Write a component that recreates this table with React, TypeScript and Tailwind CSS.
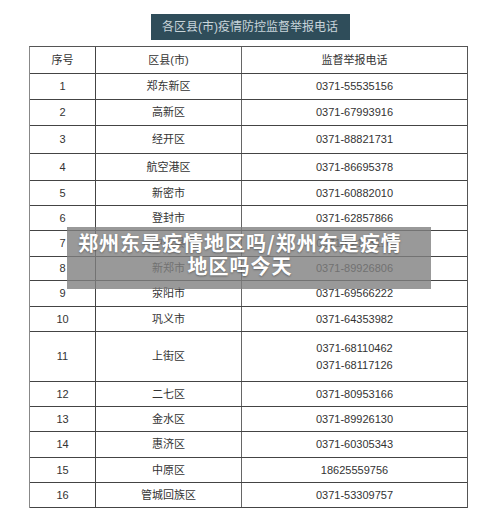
const rows = [
  { n: "1", area: "郑东新区", phone: ["0371-55535156"], h: "h-[26px]" },
  { n: "2", area: "高新区", phone: ["0371-67993916"], h: "h-[26px]" },
  { n: "3", area: "经开区", phone: ["0371-88821731"], h: "h-[28px]" },
  { n: "4", area: "航空港区", phone: ["0371-86695378"], h: "h-[27px]" },
  { n: "5", area: "新密市", phone: ["0371-60882010"], h: "h-[25px]" },
  { n: "6", area: "登封市", phone: ["0371-62857866"], h: "h-[25px]" },
  { n: "7", area: "中牟县", phone: ["0371-62193110"], h: "h-[26px]" },
  { n: "8", area: "新郑市", phone: ["0371-89926806"], h: "h-[24px]" },
  { n: "9", area: "荥阳市", phone: ["0371-69566222"], h: "h-[26px]" },
  { n: "10", area: "巩义市", phone: ["0371-64353982"], h: "h-[25px]" },
  { n: "11", area: "上街区", phone: ["0371-68110462", "0371-68117126"], h: "h-[50px]" },
  { n: "12", area: "二七区", phone: ["0371-80953166"], h: "h-[25px]" },
  { n: "13", area: "金水区", phone: ["0371-89926130"], h: "h-[25px]" },
  { n: "14", area: "惠济区", phone: ["0371-60305343"], h: "h-[26px]" },
  { n: "15", area: "中原区", phone: ["18625559756"], h: "h-[25px]" },
  { n: "16", area: "管城回族区", phone: ["0371-53309757"], h: "h-[25px]" },
];

export default function App() {
  return (
    <div className="relative w-[500px] h-[518px] bg-white overflow-hidden font-['Liberation_Sans','Noto_Sans_CJK_SC',sans-serif] text-[#333]">
      {/* Title */}
      <div className="pt-[14px] flex justify-center">
        <div className="w-[199px] h-[26px] bg-[#2f4d5a] text-[#c9d5da] text-[12px] flex items-center justify-center">
          各区县(市)疫情防控监督举报电话
        </div>
      </div>

      {/* Table */}
      <div className="mt-[6px] ml-[29px] w-[439px] border-t border-l border-r border-[#555] border-l-[#888] text-[11px]">
        <div className="grid grid-cols-[66px_146px_225px] h-[27px] border-b border-[#444]">
          <div className="flex items-center justify-center border-r border-[#444]">序号</div>
          <div className="flex items-center justify-center border-r border-[#666]">区县(市)</div>
          <div className="flex items-center justify-center">监督举报电话</div>
        </div>
        {rows.map((r) => (
          <div key={r.n} className={`grid grid-cols-[66px_146px_225px] border-b border-[#444] ${r.h}`}>
            <div className="flex items-center justify-center border-r border-[#444]">{r.n}</div>
            <div className="flex items-center justify-center border-r border-[#666]">{r.area}</div>
            <div className="flex flex-col items-center justify-center leading-[17px]">
              {r.phone.map((p) => (
                <span key={p}>{p}</span>
              ))}
            </div>
          </div>
        ))}
      </div>

      {/* Overlay banner */}
      <div className="absolute left-[67px] top-[227px] w-[364px] h-[62px] bg-[rgba(128,128,128,0.8)] pt-[4px] pr-[18px] text-center text-white font-bold text-[20px] leading-[23px] tracking-[1px] font-['Noto_Sans_CJK_SC',sans-serif] [text-shadow:0_1px_2px_rgba(0,0,0,0.35)]">
        <div>郑州东是疫情地区吗/郑州东是疫情</div>
        <div>地区吗今天</div>
      </div>
    </div>
  );
}
